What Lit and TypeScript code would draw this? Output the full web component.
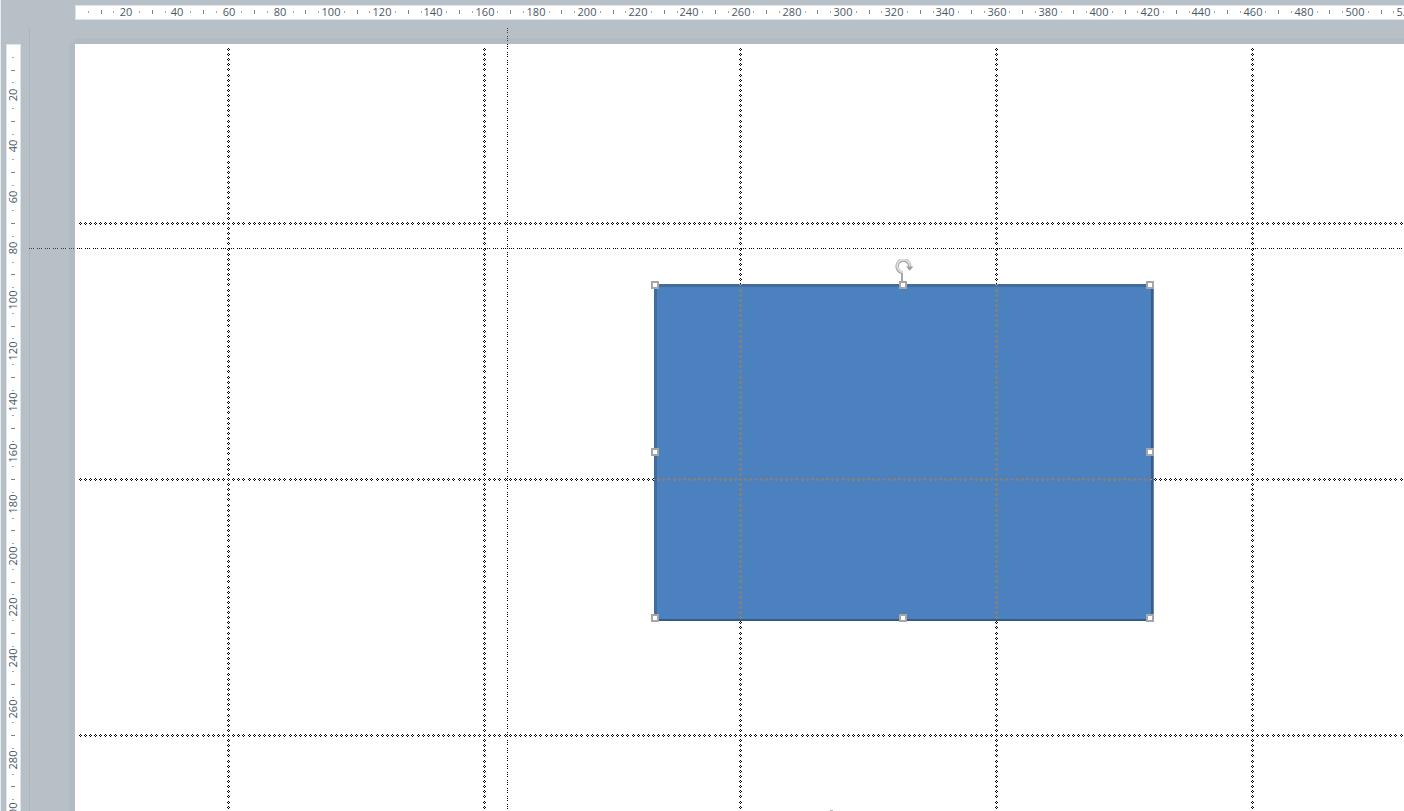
import { LitElement, html, svg, css } from "lit";
import { customElement, property, state } from "lit/decorators.js";

// Pixels per ruler unit.
const SCALE = 2.56;
const SLIDE_UNITS_X = 1000;
const SLIDE_UNITS_Y = 700;

@customElement("edit-ruler")
class EditRuler extends LitElement {
  @property() orientation = "horizontal";
  @state() private extent = 0;

  private observer = new ResizeObserver(() => this.measure());

  static styles = css`
    :host {
      display: block;
      background: #fff;
      border: 1px solid #dde3e8;
      box-sizing: border-box;
    }
    svg {
      display: block;
      overflow: visible;
      font: 11px "Open Sans", "Noto Sans", sans-serif;
      fill: #4a5865;
    }
    .tick {
      fill: #808080;
    }
    .dot {
      fill: #a6a6a6;
    }
  `;

  connectedCallback() {
    super.connectedCallback();
    this.observer.observe(this);
    this.measure();
  }

  disconnectedCallback() {
    this.observer.disconnect();
    super.disconnectedCallback();
  }

  private measure() {
    const box = this.getBoundingClientRect();
    this.extent = Math.floor(this.orientation === "horizontal" ? box.width : box.height);
  }

  render() {
    const across = this.orientation === "horizontal";
    // A label that starts inside the ruler is drawn even when its centre lies past the end.
    const reach = this.extent + 8;
    const marks = [];
    for (let u = 5; u * SCALE < reach; u += 5) {
      const p = u * SCALE;
      const at = Math.round(p);
      if (u % 20 === 0) {
        marks.push(
          across
            ? svg`<text x=${at - 1} y="10" text-anchor="middle">${u}</text>`
            : svg`<text transform="translate(10 ${Math.floor(p) - 1}) rotate(-90)" text-anchor="middle">${u}</text>`
        );
      } else {
        const major = u % 10 === 0;
        const size = major ? 4 : 2;
        const start = major ? 4 : 5;
        const kind = major ? "tick" : "dot";
        marks.push(
          across
            ? svg`<rect class=${kind} x=${at - 1} y=${start} width="1" height=${size}></rect>`
            : svg`<rect class=${kind} x=${start} y=${at - 1} width=${size} height="1"></rect>`
        );
      }
    }
    return html`<svg width=${across ? this.extent : 13} height=${across ? 13 : this.extent} aria-hidden="true">${marks}</svg>`;
  }
}

@customElement("guide-layer")
class GuideLayer extends LitElement {
  static styles = css`
    :host {
      display: block;
      position: absolute;
      inset: 0;
      overflow: hidden;
      mix-blend-mode: difference;
      pointer-events: none;
    }
    svg {
      display: block;
      width: 100%;
      height: 100%;
      shape-rendering: crispEdges;
    }
    .guide {
      fill: #fff;
    }
    .cursor {
      stroke: #fff;
      stroke-width: 1;
      stroke-dasharray: 1 1 1 1 1 3;
    }
  `;

  // A hollow four-pixel diamond centred on the pixel (x, y).
  private diamond(x: number, y: number) {
    return `M${x} ${y - 1}h1v1h-1zM${x - 1} ${y}h1v1h-1zM${x + 1} ${y}h1v1h-1zM${x} ${y + 1}h1v1h-1z`;
  }

  private guides() {
    const originX = 46;
    const originY = 16;
    const step = 2 * SCALE;
    let d = "";
    for (let x = 60; x < SLIDE_UNITS_X; x += 100) {
      const px = originX + Math.floor(x * SCALE);
      for (let k = 1; k * 2 < SLIDE_UNITS_Y; k++) {
        d += this.diamond(px, originY + Math.floor(k * step + 0.3));
      }
    }
    for (let y = 70; y < SLIDE_UNITS_Y; y += 100) {
      const py = originY + Math.floor(y * SCALE);
      for (let k = 1; k * 2 < SLIDE_UNITS_X; k++) {
        d += this.diamond(originX + Math.floor(k * step + 0.02), py);
      }
    }
    return d;
  }

  render() {
    return html`<svg aria-hidden="true">
      <path class="guide" d=${this.guides()}></path>
      <line class="cursor" x1="478.5" y1="0" x2="478.5" y2="100%"></line>
      <line class="cursor" x1="0" y1="220.5" x2="100%" y2="220.5"></line>
    </svg>`;
  }
}

@customElement("selected-shape")
class SelectedShape extends LitElement {
  static styles = css`
    :host {
      display: block;
      position: absolute;
      pointer-events: none;
    }
    .handle {
      position: absolute;
      box-sizing: border-box;
      width: 8px;
      height: 8px;
      padding: 0;
      border: 2px solid #a6a6a6;
      border-radius: 0;
      background: #fff;
    }
    .top { top: -3px; }
    .middle { top: 164px; }
    .bottom { bottom: -1px; }
    .left { left: -3px; }
    .center { left: 245px; }
    .right { right: 0; }
    .rotate {
      position: absolute;
      left: 241px;
      top: -25px;
      width: 20px;
      height: 23px;
      padding: 0;
      border: 0;
      background: none;
    }
    .rotate svg {
      display: block;
    }
  `;

  render() {
    const handles = [
      "top left", "top center", "top right",
      "middle left", "middle right",
      "bottom left", "bottom center", "bottom right",
    ];
    return html`
      <button class="rotate" aria-label="Rotate">
        <svg width="20" height="23" viewBox="0 0 20 23">
          <path d="M7 14V23" fill="none" stroke="#a6a6a6" stroke-width="2"></path>
          <path d="M7.5 13.7A6.3 6.3 0 1 1 14.6 8.5" fill="none" stroke="#a8a8a8" stroke-width="3.4"></path>
          <path d="M7.3 13.1A6.3 6.3 0 1 1 14.6 8.5" fill="none" stroke="#e4e4e4" stroke-width="1.6"></path>
          <path d="M11 7.4H18.4L14.7 11.8Z" fill="#a0a0a0"></path>
        </svg>
      </button>
      ${handles.map((h) => html`<button class="handle ${h}" aria-label="Resize ${h}"></button>`)}
    `;
  }
}

@customElement("app-root")
class AppRoot extends LitElement {
  static styles = css`
    :host {
      display: grid;
      grid-template-columns: 29px minmax(0, 1fr);
      grid-template-rows: 28px minmax(0, 1fr);
      box-sizing: border-box;
      height: 100vh;
      overflow: hidden;
      background: #b8c0c7;
      box-shadow: inset 1px 0 #e8ecef;
    }
    .across {
      grid-area: 1 / 2;
      height: 15px;
      margin: 5px 0 0 46px;
      border-right: 0;
    }
    .down {
      grid-area: 2 / 1;
      width: 15px;
      margin: 16px 0 0 6px;
      border-bottom: 0;
    }
    .stage {
      grid-area: 2 / 2;
      position: relative;
      isolation: isolate;
      display: flex;
      overflow: hidden;
      box-sizing: border-box;
      padding: 10px 0 0 40px;
      background: #b8c0c7;
      box-shadow: inset 1px 0 #adb6bd;
    }
    .edge {
      flex: 1;
      display: flex;
      padding: 6px 0 0 6px;
      border-top-left-radius: 10px;
      background: #b3bbc2;
    }
    .page {
      flex: 1;
      display: flex;
      align-items: flex-end;
      background: #fff;
    }
    .mark {
      width: 3px;
      height: 1px;
      margin-left: 755px;
      background: #b4b4b4;
    }
    .shape {
      position: absolute;
      box-sizing: border-box;
      left: 625px;
      top: 256px;
      width: 500px;
      height: 337px;
      background: #4c81bf;
      border: 3px solid #416c9c;
      border-right: 1px solid #6388b3;
      border-bottom: 2px solid #365a87;
      box-shadow: inset -2px 0 #385d8a;
    }
    .selection {
      left: 625px;
      top: 256px;
      width: 500px;
      height: 337px;
    }
  `;

  render() {
    return html`
      <edit-ruler class="across" orientation="horizontal"></edit-ruler>
      <edit-ruler class="down" orientation="vertical"></edit-ruler>
      <main class="stage">
        <div class="edge"><div class="page"><div class="mark"></div></div></div>
        <div class="shape"></div>
        <guide-layer></guide-layer>
        <selected-shape class="selection"></selected-shape>
      </main>
    `;
  }
}
